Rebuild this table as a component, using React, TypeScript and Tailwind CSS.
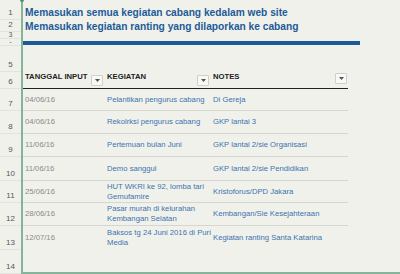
import React from "react";

type Row = {
  date: string;
  kegiatan: string;
  notes: string;
  h: string;
};

const rows: Row[] = [
  { date: "04/06/16", kegiatan: "Pelantikan pengurus  cabang", notes: "Di Gereja", h: "h-[22px]" },
  { date: "04/06/16", kegiatan: "Rekolrksi pengurus cabang", notes: "GKP lantai 3", h: "h-[23px]" },
  { date: "11/06/16", kegiatan: "Pertemuan bulan Juni", notes: "GKP lantai 2/sie Organisasi", h: "h-[23px]" },
  { date: "11/06/16", kegiatan: "Demo sanggul", notes: "GKP lantai 2/sie Pendidikan", h: "h-[24px]" },
  { date: "25/06/16", kegiatan: "HUT WKRI ke 92, lomba tari Gemufamire", notes: "Kristoforus/DPD Jakara", h: "h-[22px]" },
  { date: "28/06/16", kegiatan: "Pasar murah di kelurahan Kembangan Selatan", notes: "Kembangan/Sie Kesejahteraan", h: "h-[23px]" },
  { date: "12/07/16", kegiatan: "Baksos tg 24 Juni 2016 di Puri Media", notes: "Kegiatan ranting Santa Katarina", h: "h-[24px]" },
];

const gutter = [
  { n: "1", h: "h-[20px]", small: false },
  { n: "2", h: "h-[12px]", small: false },
  { n: "3", h: "h-[7px]", small: true },
  { n: "-", h: "h-[7px]", small: true },
  { n: "5", h: "h-[26px]", small: false },
  { n: "6", h: "h-[17px]", small: false },
  { n: "7", h: "h-[22px]", small: false },
  { n: "8", h: "h-[23px]", small: false },
  { n: "9", h: "h-[23px]", small: false },
  { n: "10", h: "h-[24px]", small: false },
  { n: "11", h: "h-[22px]", small: false },
  { n: "12", h: "h-[23px]", small: false },
  { n: "13", h: "h-[24px]", small: false },
  { n: "14", h: "h-[24px]", small: false },
];

const FilterButton = () => (
  <div className="flex h-[11px] w-[12px] items-center justify-center rounded-[1px] border border-[#cfcfcb] bg-[#f8f8f6]">
    <svg width="5" height="3" viewBox="0 0 5 3">
      <path d="M0 0h5L2.5 3z" fill="#555" />
    </svg>
  </div>
);

const App = () => {
  return (
    <div
      className="flex h-[274px] w-[400px] overflow-hidden bg-[#f1f1ec] text-[#222]"
      style={{ fontFamily: '"Liberation Sans", Arial, sans-serif' }}
    >
      {/* row numbers */}
      <div className="flex w-[21px] flex-col">
        {gutter.map((g) =>
          g.small ? (
            <div
              key={g.n}
              className={`${g.h} flex items-center justify-center overflow-hidden border-b border-[#e4e4df] text-[6.5px] leading-[6px] text-[#555]`}
            >
              {g.n}
            </div>
          ) : (
            <div
              key={g.n}
              className={`${g.h} flex items-end justify-center overflow-hidden border-b border-[#e4e4df] pb-[2px] text-[8px] leading-[8px] text-[#555]`}
            >
              {g.n}
            </div>
          )
        )}
      </div>

      {/* sheet */}
      <div className="relative flex flex-1 flex-col border-b-2 border-l-2 border-[#86b49a]">
        <div className="absolute -left-[3px] -top-[2px] h-[4px] w-[4px] rounded-full bg-[#3f9a64]" />

        <div className="h-[46px] pt-[6px]">
          <div className="pl-[2px] text-[10.2px] font-bold leading-[14px] text-[#1d5b97]">
            <div>Memasukan semua kegiatan cabang kedalam web site</div>
            <div>Memasukan kegiatan ranting yang dilaporkan ke cabang</div>
          </div>
          <div className="mt-[7px] h-[4px] w-[337px] bg-[#1c5b98]" />
        </div>

        <div className="h-[26px]" />

        <div className="flex h-[17px] w-[325px] border-b border-[#222] text-[7.7px] font-bold leading-[8px]">
          <div className="flex w-[81px] items-start justify-between pl-[2px] pr-[1px]">
            <span className="pt-[1px]">TANGGAL INPUT</span>
            <div className="mt-[3px]">
              <FilterButton />
            </div>
          </div>
          <div className="flex w-[107px] items-start justify-between pl-[3px] pr-[2px]">
            <span className="pt-[1px]">KEGIATAN</span>
            <div className="mt-[3px]">
              <FilterButton />
            </div>
          </div>
          <div className="flex w-[137px] items-start justify-between pl-[2px] pr-[1px]">
            <span className="pt-[1px]">NOTES</span>
            <div className="mt-[1px]">
              <FilterButton />
            </div>
          </div>
        </div>

        {rows.map((r, i) => (
          <div
            key={i}
            className={`${r.h} flex w-[325px] items-center text-[7.7px] leading-[10px] ${
              i < rows.length - 1 ? "border-b border-[#d6d6d1]" : ""
            }`}
          >
            <div className="w-[81px] shrink-0 pl-[2px] text-[#8a8a8a]">{r.date}</div>
            <div className="w-[107px] shrink-0 pl-[3px] text-[#3b74ae]">
              <div className="w-[110px]">{r.kegiatan}</div>
            </div>
            <div className="w-[137px] shrink-0 pl-[2px] text-[#3b74ae]">{r.notes}</div>
          </div>
        ))}
      </div>
    </div>
  );
};

export default App;
